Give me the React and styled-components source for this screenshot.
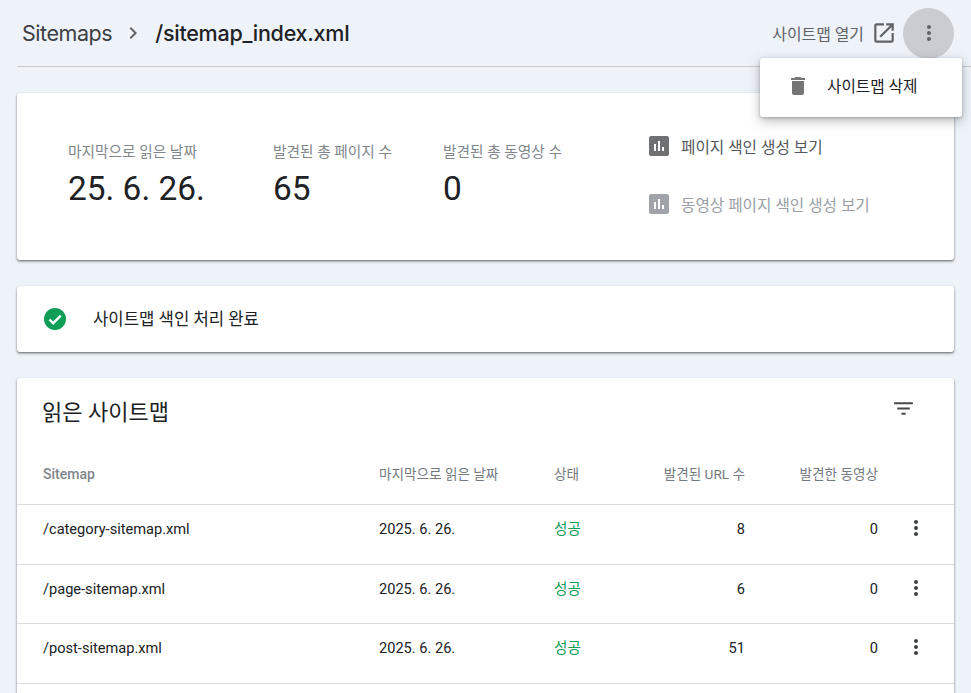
import React from 'react';
import styled, { createGlobalStyle } from 'styled-components';

const Global = createGlobalStyle`
  html, body { margin: 0; padding: 0; height: 693px; overflow: hidden; background: #eef2f9; }
  * { box-sizing: border-box; }
  body { font-family: Roboto, "Noto Sans CJK KR", sans-serif; color: #202124; }
`;

const Page = styled.div`
  position: relative;
  height: 693px;
  overflow: hidden;
  padding-left: 17px;
`;
const Header = styled.header`
  display: flex;
  align-items: center;
  height: 67px;
  border-bottom: 1px solid #c8cacc;
  padding: 0 17px 0 5px;
`;
const Crumb = styled.span`
  font-family: Inter, "Noto Sans CJK KR", sans-serif;
  font-size: 21.5px;
  letter-spacing: ${p => (p.$current ? '-0.25px' : '-0.45px')};
  color: ${p => (p.$current ? '#202124' : '#3c4043')};
  font-weight: ${p => (p.$current ? 500 : 400)};
`;
const Chevron = styled.svg`
  width: 24px;
  height: 24px;
  margin: 0 10px 0 9px;
  fill: #5f6368;
`;
const HeaderActions = styled.div`
  margin-left: auto;
  display: flex;
  align-items: center;
`;
const OpenLink = styled.span`
  font-size: 15.9px;
  font-weight: 400;
  color: #5f6368;
  margin-right: 7px;
`;
const OpenIcon = styled.svg`
  width: 26px;
  height: 26px;
  fill: #5f6368;
  margin-right: 6px;
`;
const RoundButton = styled.div`
  width: 51px;
  height: 51px;
  border-radius: 50%;
  background: #c9ccd1;
  display: flex;
  align-items: center;
  justify-content: center;
`;
const Menu = styled.div`
  position: absolute;
  left: 760px;
  top: 58px;
  width: 202px;
  height: 59px;
  background: #fff;
  border-radius: 3px;
  display: flex;
  align-items: center;
  padding: 0 0 4px 26px;
  gap: 17px;
  font-size: 15.7px;
  color: #202124;
  box-shadow: 0 4px 12px rgba(60,64,67,.35), 0 1px 3px rgba(60,64,67,.3);
  z-index: 5;
`;
const TrashIcon = styled.svg`
  width: 24px;
  height: 24px;
  fill: #757575;
`;
const Card = styled.section`
  width: 937px;
  background: #fff;
  border-radius: 3px;
  box-shadow: 0 1px 2px rgba(60,64,67,.6), 0 2px 3px rgba(60,64,67,.25);
  margin-top: ${p => p.$gap || 26}px;
`;
const SummaryCard = styled(Card)`
  height: 167px;
  display: flex;
  padding: 0 0 0 51px;
`;
const Stat = styled.div`
  width: ${p => p.$w}px;
  padding-top: 49px;
`;
const StatLabel = styled.div`
  font-size: 14.7px;
  line-height: 20px;
  color: #80868b;
`;
const StatValue = styled.div`
  font-size: 33.4px;
  line-height: 42px;
  margin-top: 6px;
  color: #202124;
`;
const Links = styled.div`
  display: flex;
  flex-direction: column;
  gap: 38px;
  padding-top: 43px;
  margin-left: 36px;
`;
const ChartLink = styled.div`
  display: flex;
  align-items: center;
  gap: 12px;
  height: 20px;
  font-size: 15.7px;
  font-weight: 400;
  color: ${p => (p.$muted ? '#9aa0a6' : '#54585c')};
`;
const ChartIcon = styled.svg`
  width: 20px;
  height: 20px;
  fill: ${p => (p.$muted ? '#a0a4a8' : '#6e7072')};
`;
const StatusCard = styled(Card)`
  height: 66px;
  display: flex;
  align-items: center;
  padding: 0 0 2px 26px;
  gap: 26px;
  font-size: 16.7px;
  color: #202124;
`;
const CheckIcon = styled.svg`
  width: 24px;
  height: 24px;
  margin-top: 2px;
`;
const TableCard = styled(Card)`
  height: 400px;
`;
const TableTop = styled.div`
  height: 66px;
  display: flex;
  align-items: center;
  justify-content: space-between;
  padding: 0 38px 0 25px;
`;
const TableTitle = styled.h2`
  margin: -2px 0 0;
  font-size: 22px;
  font-weight: 400;
  color: #202124;
`;
const FilterIcon = styled.svg`
  width: 25px;
  height: 25px;
  fill: #48494b;
  margin-top: -6px;
`;
const Row = styled.div`
  display: grid;
  grid-template-columns: 336px 175px 60px 131px 133px 76px;
  align-items: ${p => (p.$head ? 'center' : 'start')};
  height: ${p => (p.$head ? 61 : 59.67)}px;
  padding: ${p => (p.$head ? '0' : '14px')} 0 0 26px;
  border-bottom: 1px solid #dadce0;
  font-size: ${p => (p.$head ? 13.6 : 14.6)}px;
  line-height: 20px;
  color: ${p => (p.$head ? '#757a7f' : '#202124')};
  font-weight: 400;
`;
const LatinHead = styled.div`
  font-size: 14px;
  font-weight: 500;
  color: #80868b;
`;
const Num = styled.div`
  text-align: right;
`;
const Success = styled.div`
  color: #0f9d58;
`;
const Kebab = styled.svg`
  width: 24px;
  height: 24px;
  fill: ${p => p.$color || '#3c4043'};
  justify-self: center;
`;
const RowKebab = styled(Kebab)`
  margin: -3px 0 0 0;
`;

const Dots = 'M12 8c1.1 0 2-.9 2-2s-.9-2-2-2-2 .9-2 2 .9 2 2 2zm0 2c-1.1 0-2 .9-2 2s.9 2 2 2 2-.9 2-2-.9-2-2-2zm0 6c-1.1 0-2 .9-2 2s.9 2 2 2 2-.9 2-2-.9-2-2-2z';
const Bars = 'M16 0H2C.9 0 0 .9 0 2v16c0 1.1.9 2 2 2h16c1.1 0 2-.9 2-2V2c0-1.1-.9-2-2-2zM7 15H5V8h2v7zm4 0H9V5h2v10zm4 0h-2v-4h2v4z';

const rows = [
  ['/category-sitemap.xml', '8'],
  ['/page-sitemap.xml', '6'],
  ['/post-sitemap.xml', '51'],
];

export default function App() {
  return (
    <Page>
      <Global />
      <Header>
        <Crumb>Sitemaps</Crumb>
        <Chevron viewBox="0 0 24 24"><path d="M8.6 16.6 13.2 12 8.6 7.4 10 6l6 6-6 6z" /></Chevron>
        <Crumb $current>/sitemap_index.xml</Crumb>
        <HeaderActions>
          <OpenLink>사이트맵 열기</OpenLink>
          <OpenIcon viewBox="0 0 24 24"><path d="M19 19H5V5h7V3H5c-1.1 0-2 .9-2 2v14c0 1.1.9 2 2 2h14c1.1 0 2-.9 2-2v-7h-2v7zM14 3v2h3.6l-9.8 9.8 1.4 1.4L19 6.4V10h2V3h-7z" /></OpenIcon>
          <RoundButton>
            <Kebab viewBox="0 0 24 24" $color="#5f6368"><path d={Dots} /></Kebab>
          </RoundButton>
        </HeaderActions>
      </Header>
      <Menu>
        <TrashIcon viewBox="0 0 24 24"><path d="M6 19c0 1.1.9 2 2 2h8c1.1 0 2-.9 2-2V7H6v12zM19 4h-3.5l-1-1h-5l-1 1H5v2h14V4z" /></TrashIcon>
        사이트맵 삭제
      </Menu>
      <SummaryCard $gap={26}>
        <Stat $w={205}>
          <StatLabel>마지막으로 읽은 날짜</StatLabel>
          <StatValue>25. 6. 26.</StatValue>
        </Stat>
        <Stat $w={170}>
          <StatLabel>발견된 총 페이지 수</StatLabel>
          <StatValue>65</StatValue>
        </Stat>
        <Stat $w={170}>
          <StatLabel>발견된 총 동영상 수</StatLabel>
          <StatValue>0</StatValue>
        </Stat>
        <Links>
          <ChartLink>
            <ChartIcon viewBox="0 0 20 20"><path d={Bars} /></ChartIcon>
            페이지 색인 생성 보기
          </ChartLink>
          <ChartLink $muted>
            <ChartIcon $muted viewBox="0 0 20 20"><path d={Bars} /></ChartIcon>
            동영상 페이지 색인 생성 보기
          </ChartLink>
        </Links>
      </SummaryCard>
      <StatusCard>
        <CheckIcon viewBox="0 0 24 24">
          <circle cx="12" cy="12" r="11" fill="#0f9d58" />
          <path d="m6.5 12.5 3.7 3.7 7.5-7.5" fill="none" stroke="#fff" strokeWidth="2.4" />
        </CheckIcon>
        사이트맵 색인 처리 완료
      </StatusCard>
      <TableCard>
        <TableTop>
          <TableTitle>읽은 사이트맵</TableTitle>
          <FilterIcon viewBox="0 0 24 24"><path d="M10 18h4v-2h-4v2zM3 6v2h18V6H3zm3 7h12v-2H6v2z" /></FilterIcon>
        </TableTop>
        <Row $head>
          <LatinHead>Sitemap</LatinHead>
          <div>마지막으로 읽은 날짜</div>
          <div>상태</div>
          <Num>발견된 URL 수</Num>
          <Num>발견한 동영상</Num>
          <div />
        </Row>
        {rows.map(([name, count]) => (
          <Row key={name}>
            <div>{name}</div>
            <div>2025. 6. 26.</div>
            <Success>성공</Success>
            <Num>{count}</Num>
            <Num>0</Num>
            <RowKebab viewBox="0 0 24 24"><path d={Dots} /></RowKebab>
          </Row>
        ))}
      </TableCard>
    </Page>
  );
}
